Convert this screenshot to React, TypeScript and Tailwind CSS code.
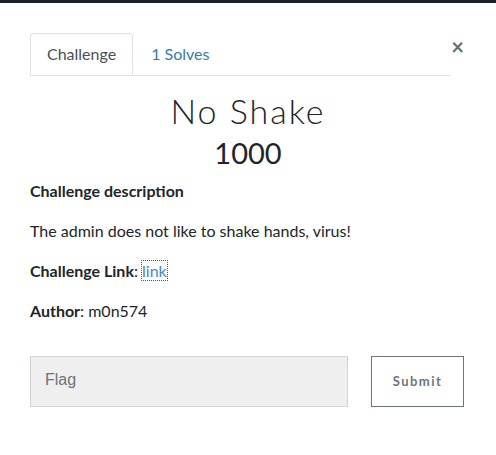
export default function App() {
  return (
    <div className="w-[496px] h-[455px] bg-white overflow-hidden font-['Lato','Noto_Sans',sans-serif] text-[#212529]">
      {/* Page behind the modal */}
      <div className="h-[3px] bg-[#1c2126]" />

      <div className="relative px-[30px] pt-[30px]">
        <button className="absolute right-[32px] top-[33px] text-[#6c6c6c] text-[22px] leading-none font-bold">
          ×
        </button>

        {/* Tabs */}
        <ul className="flex w-[420px] border-b border-[#dee2e6] text-[16px]">
          <li className="-mb-px px-[16px] h-[42px] flex items-center border border-[#dee2e6] border-b-white rounded-t-[4px] text-[#495057] bg-white">
            Challenge
          </li>
          <li className="px-[18px] h-[42px] flex items-center text-[#337ab7]">
            1 Solves
          </li>
        </ul>

        <h1 className="mt-[15px] text-center text-[34px] leading-[40px] font-light tracking-[2px] text-[#212529]">
          No Shake
        </h1>
        <h3 className="mt-[4px] text-center text-[29px] leading-[36px] text-[#212529]">
          1000
        </h3>

        <div className="mt-[8px] text-[16px] leading-[24px]">
          <p className="font-bold">Challenge description</p>
          <p className="mt-[16px]">The admin does not like to shake hands, virus!</p>
          <p className="mt-[16px]">
            <span className="font-bold">Challenge Link</span>:{" "}
            <a className="text-[#4a86c5] outline outline-1 outline-dotted outline-[#2d5f95]">link</a>
          </p>
          <p className="mt-[16px]">
            <span className="font-bold">Author</span>: m0n574
          </p>
        </div>

        <div className="mt-[33px] flex items-start">
          <div className="w-[318px] h-[51px] bg-[#efefef] border border-[#d0d5db] flex items-center px-[14px] pb-[3px] text-[16px] text-[#6c757d] font-['Liberation_Sans',Arial,sans-serif]">
            Flag
          </div>
          <button className="ml-[23px] w-[93px] h-[51px] border border-[#6c757d] text-[#6c757d] text-[13px] font-bold tracking-[1.5px]">
            Submit
          </button>
        </div>
      </div>
    </div>
  );
}
